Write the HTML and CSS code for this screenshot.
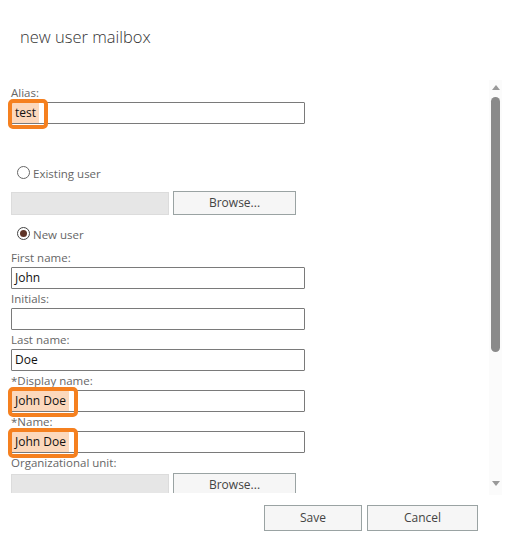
FILE: index.html
```html
<!DOCTYPE html>
<html>
<head>
<meta charset="utf-8">
<link rel="stylesheet" href="styles.css">
</head>
<body>
<div class="dialog">
  <h1 class="title">new user mailbox</h1>
  <div class="body">
    <div class="scroll">
      <div class="form">
        <div class="lbl lbl-first">Alias:</div>
        <div class="txt"><span class="val sel">test</span><span class="frame f-test"></span></div>

        <div class="radio-row r-existing"><span class="radio"></span><span class="rlabel">Existing user</span></div>
        <div class="picker">
          <div class="dis"></div>
          <div class="btn browse">Browse...</div>
        </div>
        <div class="radio-row r-new"><span class="radio on"></span><span class="rlabel">New user</span></div>

        <div class="lbl lbl-after-radio">First name:</div>
        <div class="txt"><span class="val">John</span></div>
        <div class="lbl">Initials:</div>
        <div class="txt"></div>
        <div class="lbl">Last name:</div>
        <div class="txt"><span class="val">Doe</span></div>
        <div class="lbl">*Display name:</div>
        <div class="txt"><span class="val sel">John Doe</span><span class="frame f-name"></span></div>
        <div class="lbl">*Name:</div>
        <div class="txt"><span class="val sel">John Doe</span><span class="frame f-name"></span></div>
        <div class="lbl">Organizational unit:</div>
        <div class="picker p-org">
          <div class="dis"></div>
          <div class="btn browse">Browse...</div>
        </div>
      </div>
    </div>
    <div class="sbar">
      <span class="arr up"></span>
      <span class="thumb"></span>
      <span class="fill"></span>
      <span class="arr down"></span>
    </div>
  </div>
  <div class="actions">
    <div class="btn save">Save</div>
    <div class="btn cancel">Cancel</div>
  </div>
</div>
</body>
</html>
```
FILE: styles.css
```css
html, body {
  margin: 0;
  padding: 0;
  background: #ffffff;
}
body {
  font-family: "Segoe UI", "Open Sans", "Noto Sans", sans-serif;
  color: #444;
}
.dialog {
  width: 508px;
  height: 559px;
}
.title {
  margin: 0;
  padding: 25px 0 0 20px;
  height: 30px;
  font-size: 16.5px;
  font-weight: 300;
  line-height: 24px;
  color: #333;
}
.body {
  margin-top: 25px;
  display: flex;
  height: 413px;
}
.scroll {
  width: 478px;
  height: 413px;
  overflow: hidden;
}
.form {
  padding-left: 11px;
  display: flex;
  flex-direction: column;
  align-items: flex-start;
}
.lbl {
  font-size: 11.5px;
  line-height: 19px;
  height: 19px;
  color: #666;
}
.lbl-first {
  margin-top: 3px;
}
.lbl-after-radio {
  margin-top: 3px;
}
.txt {
  position: relative;
  box-sizing: border-box;
  width: 294px;
  height: 22px;
  border: 1px solid #7a7a7a;
  border-radius: 1px;
  background: #fff;
  font-size: 12px;
  line-height: 20px;
  color: #111;
}
.val {
  display: inline-block;
  padding: 0 3px;
  height: 20px;
}
.val.sel {
  background: #fcd8bc;
}
.frame {
  position: absolute;
  left: -4px;
  top: -4px;
  height: 22px;
  border: 4px solid #f5801f;
  border-radius: 5px;
}
.f-test { width: 32px; }
.f-name { width: 62px; }
.radio-row {
  display: flex;
  align-items: center;
  height: 22px;
  margin-left: 6px;
}
.r-existing {
  margin-top: 38px;
}
.r-new {
  margin-top: 8px;
}
.radio {
  box-sizing: border-box;
  width: 13px;
  height: 13px;
  border: 1px solid #666;
  border-radius: 50%;
  margin-right: 3px;
  position: relative;
  top: -1px;
}
.radio.on {
  border-color: #444;
}
.radio.on::after {
  content: "";
  position: absolute;
  left: 2px;
  top: 2px;
  width: 7px;
  height: 7px;
  border-radius: 50%;
  background: #5e3427;
}
.rlabel {
  font-size: 11.5px;
  color: #666;
}
.picker {
  display: flex;
  align-items: center;
  gap: 4px;
  margin-top: 7px;
}
.p-org {
  margin-top: 1px;
}
.dis {
  box-sizing: border-box;
  width: 158px;
  height: 23px;
  background: #e6e6e6;
  border: 1px solid #dcdcdc;
}
.btn {
  box-sizing: border-box;
  border: 1px solid #9aa3a3;
  background: #f6f6f6;
  font-size: 12px;
  color: #444;
  text-align: center;
}
.browse {
  width: 123px;
  height: 24px;
  line-height: 22px;
}
.sbar {
  margin-left: 11px;
  width: 13px;
  height: 415px;
  background: #fbfbfb;
  display: flex;
  flex-direction: column;
  align-items: center;
}
.arr {
  width: 0;
  height: 0;
  border-left: 4.5px solid transparent;
  border-right: 4.5px solid transparent;
}
.arr.up {
  margin-top: 5px;
  border-bottom: 5px solid #999;
}
.arr.down {
  margin-bottom: 9px;
  border-top: 5px solid #999;
}
.thumb {
  margin-top: 7px;
  width: 9px;
  height: 255px;
  border-radius: 5px;
  background: #8a8a8a;
}
.fill {
  flex: 1;
}
.actions {
  display: flex;
  justify-content: flex-end;
  gap: 5px;
  padding-right: 30px;
  margin-top: 12px;
}
.save, .cancel {
  height: 26px;
  line-height: 24px;
  font-size: 12px;
}
.save { width: 98px; }
.cancel { width: 111px; }
```
